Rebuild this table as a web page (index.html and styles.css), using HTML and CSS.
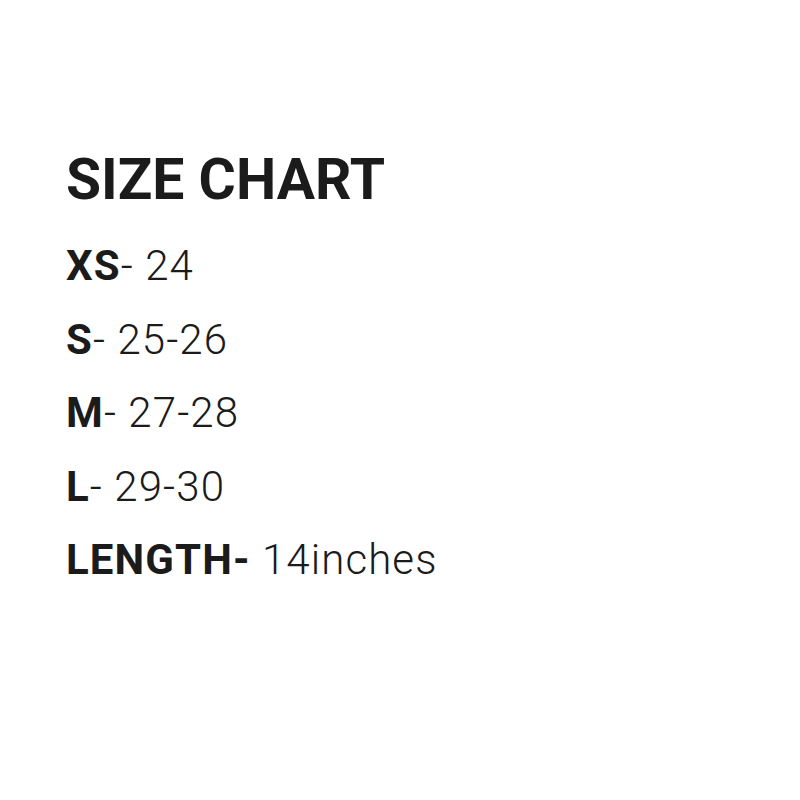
FILE: index.html
```html
<!DOCTYPE html>
<html>
<head>
<meta charset="utf-8">
<link rel="stylesheet" href="styles.css">
</head>
<body>
<div class="chart">
  <h1 class="title">SIZE CHART</h1>
  <ul class="sizes">
    <li><b>XS</b>- 24</li>
    <li><b>S</b>- 25-26</li>
    <li><b>M</b>- 27-28</li>
    <li><b>L</b>- 29-30</li>
    <li><b>LENGTH-</b> 14inches</li>
  </ul>
</div>
</body>
</html>
```
FILE: styles.css
```css
html, body {
  margin: 0;
  background: #ffffff;
}
.chart {
  padding: 151px 0 0 66px;
  font-family: Roboto, "Liberation Sans", sans-serif;
  color: #1b1b1b;
}
.title {
  margin: 0 0 21px 0;
  font-size: 57px;
  line-height: 57px;
  font-weight: 700;
}
.sizes {
  list-style: none;
  margin: 0;
  padding: 0;
  font-size: 42px;
  line-height: 73.5px;
  font-weight: 300;
  letter-spacing: 1.1px;
}
.sizes b {
  font-weight: 700;
  letter-spacing: 1.1px;
}
```
